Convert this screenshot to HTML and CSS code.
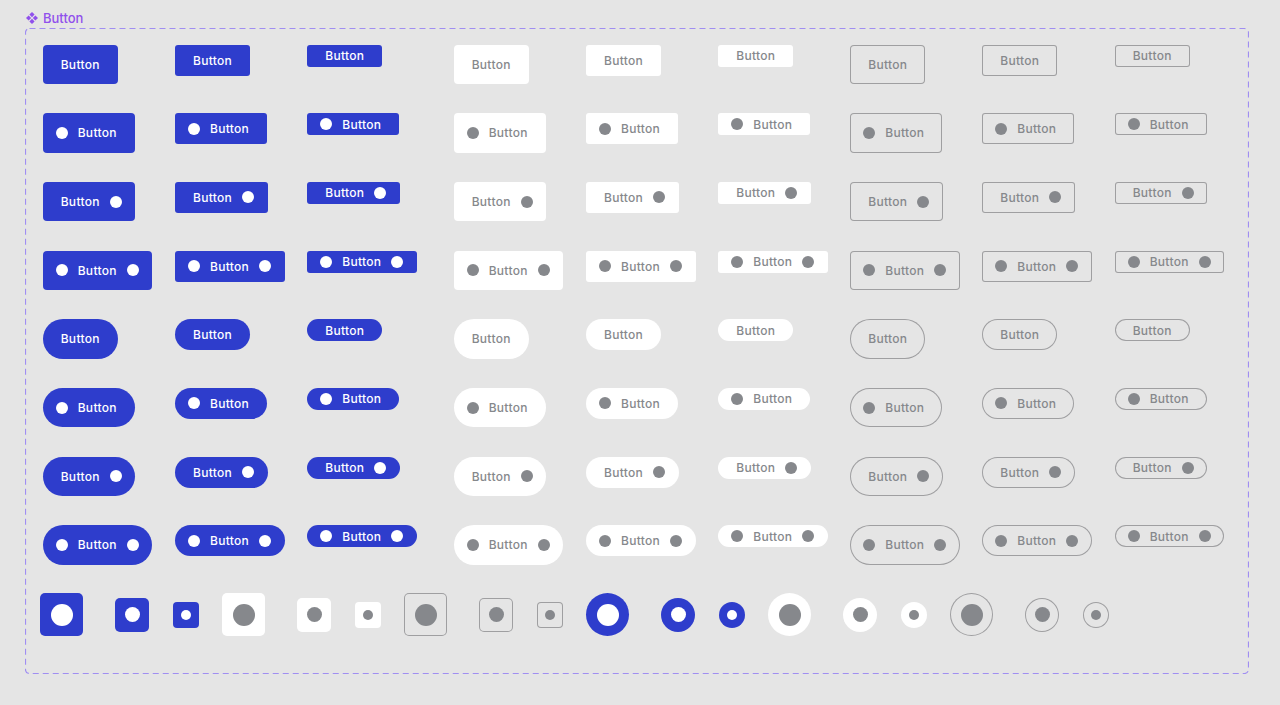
FILE: index.html
```html
<!DOCTYPE html>
<html lang="en">
<head>
<meta charset="utf-8">
<title>Button component set</title>
<link rel="stylesheet" href="styles.css">
</head>
<body>
<div class="page">
  <div class="set-label">
    <svg class="set-icon" width="12" height="12" viewBox="0 0 12 12" aria-hidden="true">
      <path d="M6 0L8.6 2.6L6 5.2L3.4 2.6Z M2.6 3.4L5.2 6L2.6 8.6L0 6Z M9.4 3.4L12 6L9.4 8.6L6.8 6Z M6 6.8L8.6 9.4L6 12L3.4 9.4Z" fill="currentColor"/>
    </svg>
    <span>Button</span>
  </div>

  <div class="set">
    <svg class="set-outline" width="1224" height="646" aria-hidden="true">
      <rect x="0.5" y="0.5" width="1223" height="645" rx="4" ry="4" fill="none" stroke="#a08ef2" stroke-width="1.2" stroke-dasharray="6 4"/>
    </svg>

    <div class="grid">
      <!-- row 1: text only -->
      <button class="btn btn-l primary">Button</button>
      <button class="btn btn-m primary">Button</button>
      <button class="btn btn-s primary">Button</button>
      <button class="btn btn-l white">Button</button>
      <button class="btn btn-m white">Button</button>
      <button class="btn btn-s white">Button</button>
      <button class="btn btn-l outline">Button</button>
      <button class="btn btn-m outline">Button</button>
      <button class="btn btn-s outline">Button</button>

      <!-- row 2: leading icon -->
      <button class="btn btn-l primary lead"><span class="dot"></span>Button</button>
      <button class="btn btn-m primary lead"><span class="dot"></span>Button</button>
      <button class="btn btn-s primary lead"><span class="dot"></span>Button</button>
      <button class="btn btn-l white lead"><span class="dot"></span>Button</button>
      <button class="btn btn-m white lead"><span class="dot"></span>Button</button>
      <button class="btn btn-s white lead"><span class="dot"></span>Button</button>
      <button class="btn btn-l outline lead"><span class="dot"></span>Button</button>
      <button class="btn btn-m outline lead"><span class="dot"></span>Button</button>
      <button class="btn btn-s outline lead"><span class="dot"></span>Button</button>

      <!-- row 3: trailing icon -->
      <button class="btn btn-l primary trail">Button<span class="dot"></span></button>
      <button class="btn btn-m primary trail">Button<span class="dot"></span></button>
      <button class="btn btn-s primary trail">Button<span class="dot"></span></button>
      <button class="btn btn-l white trail">Button<span class="dot"></span></button>
      <button class="btn btn-m white trail">Button<span class="dot"></span></button>
      <button class="btn btn-s white trail">Button<span class="dot"></span></button>
      <button class="btn btn-l outline trail">Button<span class="dot"></span></button>
      <button class="btn btn-m outline trail">Button<span class="dot"></span></button>
      <button class="btn btn-s outline trail">Button<span class="dot"></span></button>

      <!-- row 4: both icons -->
      <button class="btn btn-l primary lead trail"><span class="dot"></span>Button<span class="dot"></span></button>
      <button class="btn btn-m primary lead trail"><span class="dot"></span>Button<span class="dot"></span></button>
      <button class="btn btn-s primary lead trail"><span class="dot"></span>Button<span class="dot"></span></button>
      <button class="btn btn-l white lead trail"><span class="dot"></span>Button<span class="dot"></span></button>
      <button class="btn btn-m white lead trail"><span class="dot"></span>Button<span class="dot"></span></button>
      <button class="btn btn-s white lead trail"><span class="dot"></span>Button<span class="dot"></span></button>
      <button class="btn btn-l outline lead trail"><span class="dot"></span>Button<span class="dot"></span></button>
      <button class="btn btn-m outline lead trail"><span class="dot"></span>Button<span class="dot"></span></button>
      <button class="btn btn-s outline lead trail"><span class="dot"></span>Button<span class="dot"></span></button>

      <!-- row 5: pill text only -->
      <button class="btn btn-l primary pill">Button</button>
      <button class="btn btn-m primary pill">Button</button>
      <button class="btn btn-s primary pill">Button</button>
      <button class="btn btn-l white pill">Button</button>
      <button class="btn btn-m white pill">Button</button>
      <button class="btn btn-s white pill">Button</button>
      <button class="btn btn-l outline pill">Button</button>
      <button class="btn btn-m outline pill">Button</button>
      <button class="btn btn-s outline pill">Button</button>

      <!-- row 6: pill leading icon -->
      <button class="btn btn-l primary pill lead"><span class="dot"></span>Button</button>
      <button class="btn btn-m primary pill lead"><span class="dot"></span>Button</button>
      <button class="btn btn-s primary pill lead"><span class="dot"></span>Button</button>
      <button class="btn btn-l white pill lead"><span class="dot"></span>Button</button>
      <button class="btn btn-m white pill lead"><span class="dot"></span>Button</button>
      <button class="btn btn-s white pill lead"><span class="dot"></span>Button</button>
      <button class="btn btn-l outline pill lead"><span class="dot"></span>Button</button>
      <button class="btn btn-m outline pill lead"><span class="dot"></span>Button</button>
      <button class="btn btn-s outline pill lead"><span class="dot"></span>Button</button>

      <!-- row 7: pill trailing icon -->
      <button class="btn btn-l primary pill trail">Button<span class="dot"></span></button>
      <button class="btn btn-m primary pill trail">Button<span class="dot"></span></button>
      <button class="btn btn-s primary pill trail">Button<span class="dot"></span></button>
      <button class="btn btn-l white pill trail">Button<span class="dot"></span></button>
      <button class="btn btn-m white pill trail">Button<span class="dot"></span></button>
      <button class="btn btn-s white pill trail">Button<span class="dot"></span></button>
      <button class="btn btn-l outline pill trail">Button<span class="dot"></span></button>
      <button class="btn btn-m outline pill trail">Button<span class="dot"></span></button>
      <button class="btn btn-s outline pill trail">Button<span class="dot"></span></button>

      <!-- row 8: pill both icons -->
      <button class="btn btn-l primary pill lead trail"><span class="dot"></span>Button<span class="dot"></span></button>
      <button class="btn btn-m primary pill lead trail"><span class="dot"></span>Button<span class="dot"></span></button>
      <button class="btn btn-s primary pill lead trail"><span class="dot"></span>Button<span class="dot"></span></button>
      <button class="btn btn-l white pill lead trail"><span class="dot"></span>Button<span class="dot"></span></button>
      <button class="btn btn-m white pill lead trail"><span class="dot"></span>Button<span class="dot"></span></button>
      <button class="btn btn-s white pill lead trail"><span class="dot"></span>Button<span class="dot"></span></button>
      <button class="btn btn-l outline pill lead trail"><span class="dot"></span>Button<span class="dot"></span></button>
      <button class="btn btn-m outline pill lead trail"><span class="dot"></span>Button<span class="dot"></span></button>
      <button class="btn btn-s outline pill lead trail"><span class="dot"></span>Button<span class="dot"></span></button>
    </div>

    <div class="icon-row">
      <div class="ib-group">
        <button class="ib ib-l primary" aria-label="Button"><span class="dot"></span></button>
        <button class="ib ib-m primary" aria-label="Button"><span class="dot"></span></button>
        <button class="ib ib-s primary" aria-label="Button"><span class="dot"></span></button>
      </div>
      <div class="ib-group">
        <button class="ib ib-l white" aria-label="Button"><span class="dot"></span></button>
        <button class="ib ib-m white" aria-label="Button"><span class="dot"></span></button>
        <button class="ib ib-s white" aria-label="Button"><span class="dot"></span></button>
      </div>
      <div class="ib-group">
        <button class="ib ib-l outline" aria-label="Button"><span class="dot"></span></button>
        <button class="ib ib-m outline" aria-label="Button"><span class="dot"></span></button>
        <button class="ib ib-s outline" aria-label="Button"><span class="dot"></span></button>
      </div>
      <div class="ib-group">
        <button class="ib ib-l primary round" aria-label="Button"><span class="dot"></span></button>
        <button class="ib ib-m primary round" aria-label="Button"><span class="dot"></span></button>
        <button class="ib ib-s primary round" aria-label="Button"><span class="dot"></span></button>
      </div>
      <div class="ib-group">
        <button class="ib ib-l white round" aria-label="Button"><span class="dot"></span></button>
        <button class="ib ib-m white round" aria-label="Button"><span class="dot"></span></button>
        <button class="ib ib-s white round" aria-label="Button"><span class="dot"></span></button>
      </div>
      <div class="ib-group">
        <button class="ib ib-l outline round" aria-label="Button"><span class="dot"></span></button>
        <button class="ib ib-m outline round" aria-label="Button"><span class="dot"></span></button>
        <button class="ib ib-s outline round" aria-label="Button"><span class="dot"></span></button>
      </div>
    </div>
  </div>
</div>
</body>
</html>
```

FILE: styles.css
```css
html, body {
  margin: 0;
  background: #e5e5e5;
}

body {
  font-family: Inter, "Liberation Sans", sans-serif;
}

.page {
  padding: 10.4px 0 0 25px;
}

.set-label {
  display: flex;
  align-items: center;
  gap: 5px;
  height: 16px;
  margin-left: 1px;
  color: #9050ec;
  font-size: 13px;
  font-weight: 500;
  line-height: 16px;
}

.set-icon {
  display: block;
  flex: none;
}

.set {
  position: relative;
  box-sizing: border-box;
  width: 1224px;
  height: 646px;
  margin-top: 1.6px;
  padding: 16.7px 0 0 17.7px;
}

.set-outline {
  position: absolute;
  top: 0;
  left: 0;
  pointer-events: none;
}

.grid {
  display: grid;
  grid-template-columns: 132.3px 132.3px 146.4px 132.3px 132.3px 132px 132px 132.4px auto;
  grid-auto-rows: 39.33px;
  row-gap: 29.34px;
  align-items: start;
  justify-items: start;
}

/* text buttons */
.btn {
  box-sizing: border-box;
  display: inline-flex;
  align-items: center;
  justify-content: center;
  gap: 10px;
  margin: 0;
  padding: 1px 18px 0;
  border: 0;
  font-family: Inter, "Liberation Sans", sans-serif;
  font-size: 12px;
  font-weight: 500;
  line-height: 1;
  letter-spacing: 0.3px;
  white-space: nowrap;
  cursor: pointer;
}

.btn-l { height: 39.33px; border-radius: 4px; }
.btn-m { height: 31px; border-radius: 3px; }
.btn-s { height: 22px; border-radius: 3px; }

.btn.lead { padding-left: 13px; }
.btn.trail { padding-right: 13.5px; }
.btn.pill { border-radius: 999px; }

.dot {
  flex: none;
  display: block;
  width: 12px;
  height: 12px;
  border-radius: 50%;
}

.btn .dot { margin-top: -1px; }

.primary {
  background: #2e3dcc;
  color: #ffffff;
}
.primary .dot { background: #ffffff; }

.white {
  background: #ffffff;
  color: #86888c;
}
.white .dot { background: #86888c; }

.outline {
  background: transparent;
  box-shadow: inset 0 0 0 1px #9f9fa1;
  color: #86888c;
}
.outline .dot { background: #86888c; }

/* icon-only buttons */
.icon-row {
  display: flex;
  align-items: center;
  gap: 23px;
  height: 43px;
  margin: 28.7px 0 0 -2.7px;
}

.ib-group {
  display: flex;
  align-items: center;
}

.ib {
  box-sizing: border-box;
  display: flex;
  align-items: center;
  justify-content: center;
  margin: 0;
  padding: 0;
  border: 0;
  cursor: pointer;
}

.ib-l { width: 43px; height: 43px; border-radius: 5px; margin-right: 32px; }
.ib-m { width: 34px; height: 34px; border-radius: 5px; margin-right: 24px; }
.ib-s { width: 26px; height: 26px; border-radius: 4px; }

.ib-l .dot { width: 22px; height: 22px; }
.ib-m .dot { width: 15px; height: 15px; }
.ib-s .dot { width: 10px; height: 10px; }

.ib.round { border-radius: 50%; }
```
